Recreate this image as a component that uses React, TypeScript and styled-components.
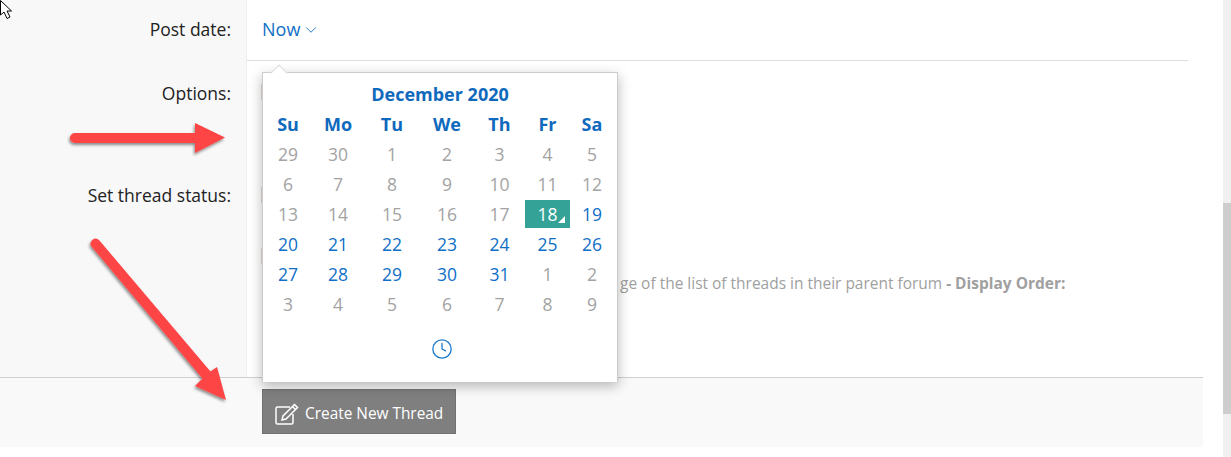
import styled, { createGlobalStyle } from "styled-components";
import { ChevronDown, Clock } from "lucide-react";

const GlobalStyle = createGlobalStyle`
    html, body {
        margin: 0;
        padding: 0;
        background: #fff;
        overflow: hidden;
    }
    * {
        box-sizing: border-box;
    }
`

const Page = styled.div`
    position: relative;
    width: 1231px;
    height: 457px;
    display: flex;
    font-family: "Open Sans", "Liberation Sans", sans-serif;
    overflow: hidden;
`
const Content = styled.div`
    flex: 1;
    padding-right: 20px;
`
const Form = styled.div`
    width: 1203px;
    height: 447px;
    display: flex;
    flex-direction: column;
`
const Row = styled.div<{ $height: number }>`
    display: grid;
    grid-template-columns: 247px 1fr;
    height: ${(p) => p.$height}px;
`
const Label = styled.div<{ $top: number }>`
    background: #f8f8f8;
    border-right: 1px solid #eeeeee;
    padding: ${(p) => p.$top}px 15px 0 0;
    text-align: right;
    font-size: 17.5px;
    line-height: 22px;
    color: #222;
`
const Value = styled.div<{ $divider?: boolean }>`
    margin-right: 15px;
    padding-left: 15px;
    border-bottom: ${(p) => (p.$divider ? "1px solid #dddddd" : "none")};
`
const NowLink = styled.div`
    display: flex;
    align-items: center;
    gap: 2px;
    padding-top: 18px;
    font-size: 18px;
    line-height: 23px;
    color: #0f6fc6;
`
const CheckBox = styled.div<{ $top: number }>`
    width: 16px;
    height: 16px;
    margin: ${(p) => p.$top}px 0 0 -1px;
    border: 1px solid #e6d9d3;
`
const Hint = styled.div`
    margin: 9px 0 0 358px;
    font-size: 15.47px;
    line-height: 20px;
    color: #a0a0a0;
    white-space: nowrap;
    b {
        font-weight: 700;
    }
`
const Footer = styled.div`
    flex: 1;
    background: #f9f9f9;
    border-top: 1px solid #cfcfcf;
    padding: 11px 0 0 262px;
`
const SubmitButton = styled.div`
    width: 194px;
    height: 45px;
    display: flex;
    align-items: center;
    gap: 6px;
    padding: 4px 0 0 12px;
    background: #7f7f7f;
    border: 1px solid #727272;
    color: #fff;
    font-size: 15.4px;
`
const ScrollTrack = styled.div`
    width: 8px;
    background: #f0f0f0;
    padding-top: 203px;
`
const ScrollThumb = styled.div`
    height: 211px;
    background: #cdcdcd;
`
const Picker = styled.div`
    position: absolute;
    left: 262px;
    top: 72px;
    width: 356px;
    height: 310px;
    padding-top: 10px;
    background: #fff;
    border: 1px solid #cccccc;
    border-bottom: none;
    box-shadow: 0 4px 12px rgba(0, 0, 0, 0.28);
    &::before {
        content: "";
        position: absolute;
        left: 10px;
        top: -6px;
        width: 11px;
        height: 11px;
        background: #fff;
        border-left: 1px solid #dddddd;
        border-top: 1px solid #dddddd;
        transform: rotate(45deg);
    }
`
const MonthTitle = styled.div`
    position: relative;
    text-align: center;
    font-size: 18px;
    line-height: 23px;
    font-weight: 700;
    color: #0f69bd;
`
const CalendarGrid = styled.div`
    display: grid;
    grid-template-columns: 48px 52px 56px 54px 51px 45px 44px;
    grid-auto-rows: 28px;
    row-gap: 2px;
    margin: 4px 0 0 1px;
`
const DayName = styled.div`
    display: flex;
    align-items: center;
    justify-content: center;
    font-size: 18px;
    font-weight: 700;
    color: #0f69bd;
`
const Day = styled.div<{ $muted?: boolean; $selected?: boolean }>`
    position: relative;
    display: flex;
    align-items: center;
    justify-content: center;
    font-size: 17.5px;
    color: ${(p) => (p.$selected ? "#fff" : p.$muted ? "#a3a3a3" : "#0f6fc6")};
    background: ${(p) => (p.$selected ? "#35a298" : "transparent")};
    ${(p) =>
        p.$selected &&
        `&::after {
            content: "";
            position: absolute;
            right: 5px;
            bottom: 5px;
            border-style: solid;
            border-width: 0 0 7px 7px;
            border-color: transparent transparent #fff transparent;
        }`}
`
const ClockRow = styled.div`
    display: flex;
    justify-content: center;
    margin-top: 20px;
    padding-left: 4px;
    color: #1a78cc;
`
const Overlay = styled.svg`
    position: absolute;
    left: 0;
    top: 0;
    pointer-events: none;
`

const dayNames = ["Su", "Mo", "Tu", "We", "Th", "Fr", "Sa"];

// 42 cells, december starts after 29 and 30 of the month before
const days = [
    29, 30, 1, 2, 3, 4, 5, 6, 7, 8, 9, 10, 11, 12, 13, 14, 15, 16, 17, 18, 19, 20, 21, 22, 23, 24, 25, 26, 27, 28, 29,
    30, 31, 1, 2, 3, 4, 5, 6, 7, 8, 9,
];

function App() {
    return (
        <Page>
            <GlobalStyle />
            <Content>
                <Form>
                    <Row $height={61}>
                        <Label $top={18}>Post date:</Label>
                        <Value $divider>
                            <NowLink>
                                Now
                                <ChevronDown size={18} strokeWidth={1.2} />
                            </NowLink>
                        </Value>
                    </Row>
                    <Row $height={102}>
                        <Label $top={21}>Options:</Label>
                        <Value>
                            <CheckBox $top={23} />
                        </Value>
                    </Row>
                    <Row $height={214}>
                        <Label $top={21}>Set thread status:</Label>
                        <Value>
                            <CheckBox $top={24} />
                            <CheckBox $top={45} />
                            <Hint>
                                ge of the list of threads in their parent forum <b>- Display Order:</b>
                            </Hint>
                        </Value>
                    </Row>
                    <Footer>
                        <SubmitButton>
                            <svg width="24" height="22" viewBox="0 0 24 22" fill="none" stroke="#fff" strokeWidth="1.5">
                                <path d="M15 4H2.5A1.5 1.5 0 0 0 1 5.5v14A1.5 1.5 0 0 0 2.5 21h14a1.5 1.5 0 0 0 1.5-1.5V11" />
                                <path d="M19.5 1.5l3 3L11 16l-4 1 1-4z" />
                                <path d="M17.5 3.5l3 3" />
                            </svg>
                            Create New Thread
                        </SubmitButton>
                    </Footer>
                </Form>
            </Content>
            <ScrollTrack>
                <ScrollThumb />
            </ScrollTrack>

            <Picker>
                <MonthTitle>December 2020</MonthTitle>
                <CalendarGrid>
                    {dayNames.map((name) => (
                        <DayName key={name}>{name}</DayName>
                    ))}
                    {days.map((day, i) => (
                        <Day key={i} $muted={i < 19 || i > 32} $selected={i === 19}>
                            {day}
                        </Day>
                    ))}
                </CalendarGrid>
                <ClockRow>
                    <Clock size={22} strokeWidth={1.4} />
                </ClockRow>
            </Picker>

            <Overlay width="1231" height="457" viewBox="0 0 1231 457">
                <defs>
                    <filter id="arrowShadow" x="-20%" y="-20%" width="140%" height="140%">
                        <feDropShadow dx="-1" dy="2" stdDeviation="1.5" floodColor="#000" floodOpacity="0.45" />
                    </filter>
                </defs>
                <g filter="url(#arrowShadow)" fill="#fe4444">
                    <path d="M75 133H195V123L225 137.5L195 153V143H75a5 5 0 0 1 0-10z" />
                    <path d="M91.5 246.5a5 5 0 0 1 7.5-6.500L210.500 371.500L217 367L226 400L195 386L202.500 378.500z" />
                </g>
                {/* mouse cursor */}
                <path d="M0.500 0.500V15L4 12L7 18.500L10 17L7 11H11.500z" fill="#fff" stroke="#000" strokeWidth="1" />
            </Overlay>
        </Page>
    );
}

export default App;
